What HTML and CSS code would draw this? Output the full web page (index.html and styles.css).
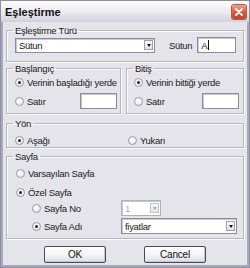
FILE: index.html
```html
<!DOCTYPE html>
<html>
<head>
<meta charset="utf-8">
<link rel="stylesheet" href="styles.css">
</head>
<body>
<div class="window">
  <div class="titlebar">
    <span class="title">Eşleştirme</span>
    <span class="close"><svg width="14" height="14" viewBox="0 0 14 14"><path d="M4 4 L10 10 M10 4 L4 10" stroke="#fff" stroke-width="1.8" stroke-linecap="round"/></svg></span>
  </div>
  <div class="body">
    <fieldset class="group g-type">
      <legend>Eşleştirme Türü</legend>
      <div class="inner row">
        <div class="combo c-type"><span class="val">Sütun</span><span class="arrow"></span></div>
        <span class="lbl-sutun">Sütun</span>
        <div class="input i-sutun">A<span class="caret"></span></div>
      </div>
    </fieldset>
    <div class="pair">
      <fieldset class="group g-start">
        <legend>Başlangıç</legend>
        <div class="inner rows">
          <div class="opt"><span class="radio on"></span>Verinin başladığı yerde</div>
          <div class="opt with-input"><span class="radio"></span>Satır<div class="input i-row"></div></div>
        </div>
      </fieldset>
      <fieldset class="group g-end">
        <legend>Bitiş</legend>
        <div class="inner rows">
          <div class="opt"><span class="radio on"></span>Verinin bittiği yerde</div>
          <div class="opt with-input"><span class="radio"></span>Satır<div class="input i-row"></div></div>
        </div>
      </fieldset>
    </div>
    <fieldset class="group g-dir">
      <legend>Yön</legend>
      <div class="inner dir">
        <div class="opt o-down"><span class="radio on"></span>Aşağı</div>
        <div class="opt"><span class="radio"></span>Yukarı</div>
      </div>
    </fieldset>
    <fieldset class="group g-sheet">
      <legend>Sayfa</legend>
      <div class="inner sheet">
        <div class="opt r1"><span class="radio"></span>Varsayılan Sayfa</div>
        <div class="opt r2"><span class="radio on"></span>Özel Sayfa</div>
        <div class="opt r3 sub"><span class="sublabel"><span class="radio"></span>Sayfa No</span><div class="combo c-no disabled"><span class="val">1</span><span class="arrow"></span></div></div>
        <div class="opt r4 sub"><span class="sublabel"><span class="radio on"></span>Sayfa Adı</span><div class="combo c-name"><span class="val">fiyatlar</span><span class="arrow"></span></div></div>
      </div>
    </fieldset>
    <div class="buttons">
      <button class="btn">OK</button>
      <button class="btn">Cancel</button>
    </div>
  </div>
</div>
</body>
</html>
```
FILE: styles.css
```css
html, body {
  margin: 0;
  padding: 0;
  background: #e4e4ea;
}
body {
  font-family: "Liberation Sans", Arial, sans-serif;
  font-size: 9.5px;
  letter-spacing: -0.3px;
  color: #222;
}
.window {
  width: 250px;
  height: 268px;
  box-sizing: border-box;
  background: #a9a9bb;
  display: flex;
  flex-direction: column;
  border: 1px solid #8e8ea2;
}
.titlebar {
  height: 21px;
  flex: none;
  display: flex;
  align-items: center;
  justify-content: space-between;
  padding: 0 3px 0 4px;
  background: linear-gradient(#fefefe 0%, #ededf2 45%, #dcdce4 80%, #d0d0da 100%);
}
.title {
  font-family: "Liberation Sans", Arial, sans-serif;
  font-weight: bold;
  font-size: 11px;
  letter-spacing: 0;
  color: #111;
  margin-top: 1px;
}
.close {
  width: 14px;
  height: 14px;
  border-radius: 2px;
  background: linear-gradient(#eca08e, #d45a3e 55%, #c24528);
  box-shadow: 0 0 0 1px #b85a48;
  display: flex;
  margin-top: 1px;
}
.body {
  flex: 1;
  margin: 0 2px 2px 2px;
  background: #e4e4ea;
  padding: 3px 3px 0 3px;
  display: flex;
  flex-direction: column;
}
.group {
  margin: 0;
  padding: 0;
  min-width: 0;
  border: 1px solid #b6b6c0;
  box-shadow: inset 1px 1px 0 #fbfbfd, 1px 1px 0 #fbfbfd;
}
.group legend {
  padding: 0 2px;
  margin-left: 6px;
  line-height: 11px;
}
.row {
  display: flex;
  align-items: center;
}
.g-type .inner {
  padding: 1px 4px 8px 8px;
}
.combo {
  height: 15px;
  box-sizing: border-box;
  background: #fff;
  border: 1px solid #8c8c9a;
  box-shadow: inset 1px 1px 0 #c8c8d0;
  display: flex;
  align-items: center;
  justify-content: space-between;
  padding-left: 3px;
  padding-right: 1px;
}
.combo .arrow {
  width: 9px;
  height: 10px;
  box-sizing: border-box;
  border: 1px solid #a0a0ac;
  background: linear-gradient(#fafafa, #e2e2e8);
  position: relative;
}
.combo .arrow::after {
  content: "";
  position: absolute;
  left: 1.5px;
  top: 3px;
  border-left: 2.5px solid transparent;
  border-right: 2.5px solid transparent;
  border-top: 3px solid #111;
}
.combo.disabled .val { color: #a8a8b0; }
.combo.disabled { border-color: #b0b0bc; }
.combo.disabled .arrow::after { border-top-color: #a8a8b0; }
.combo.disabled .arrow { border-color: #c4c4cc; }
.c-type { width: 140px; }
.lbl-sutun { margin-left: 14px; }
.input {
  height: 16px;
  box-sizing: border-box;
  background: #fff;
  border: 1px solid #8c8c9a;
  box-shadow: inset 1px 1px 0 #c8c8d0;
}
.i-sutun {
  width: 39px;
  margin-left: 5px;
  display: flex;
  align-items: center;
  padding-left: 3px;
}
.caret {
  width: 1px;
  height: 10px;
  background: #111;
  margin-left: 1px;
}
.pair {
  display: flex;
  gap: 5px;
  margin-top: 1px;
}
.g-start { width: 115px; box-sizing: border-box; }
.g-end { flex: 1; }
.rows {
  display: flex;
  flex-direction: column;
  gap: 4px;
  padding: 1px 3px 4px 8px;
}
.g-end .rows { padding-left: 7px; padding-right: 4px; }
.opt {
  display: flex;
  align-items: center;
  height: 14px;
  white-space: nowrap;
}
.opt.with-input { height: 16px; }
.opt.with-input .input { margin-left: auto; }
.i-row { width: 37px; }
.radio {
  width: 9px;
  height: 9px;
  box-sizing: border-box;
  border-radius: 50%;
  border: 1px solid #9a9aa8;
  background: radial-gradient(circle at 40% 40%, #ffffff 0%, #e8e8ee 70%, #d4d4dc 100%);
  margin-right: 3px;
  flex: none;
  position: relative;
}
.radio.on::after {
  content: "";
  position: absolute;
  left: 2px;
  top: 2px;
  width: 3px;
  height: 3px;
  border-radius: 50%;
  background: #222;
}
.g-dir { margin-top: 4px; }
.dir {
  display: flex;
  padding: 5px 4px 0 8px;
}
.dir .opt { height: 13px; }
.o-down { width: 113px; }
.g-sheet { margin-top: 3px; }
.sheet {
  display: flex;
  flex-direction: column;
  padding: 5px 5px 4px 9px;
}
.sheet .r1 { height: 12px; }
.sheet .r2 { height: 12px; margin-top: 7px; }
.sheet .r3 { height: 16px; margin-top: 2px; }
.sheet .r4 { height: 16px; margin-top: 2px; }
.sub { padding-left: 16px; }
.sublabel {
  width: 89px;
  display: flex;
  align-items: center;
}
.combo.c-no { width: 40px; height: 16px; }
.combo.c-name { width: 116px; height: 16px; }
.buttons {
  display: flex;
  justify-content: center;
  gap: 38px;
  margin-top: 7px;
}
.btn {
  width: 62px;
  height: 17px;
  padding: 0;
  font-family: "Liberation Sans", Arial, sans-serif;
  font-size: 10px;
  letter-spacing: -0.2px;
  color: #111;
  border: 1px solid #4a4a58;
  border-radius: 2px;
  background: linear-gradient(#ffffff, #f2f2f5 60%, #dcdce4);
  box-shadow: inset -1px -1px 0 #c4c4cc;
}
```
